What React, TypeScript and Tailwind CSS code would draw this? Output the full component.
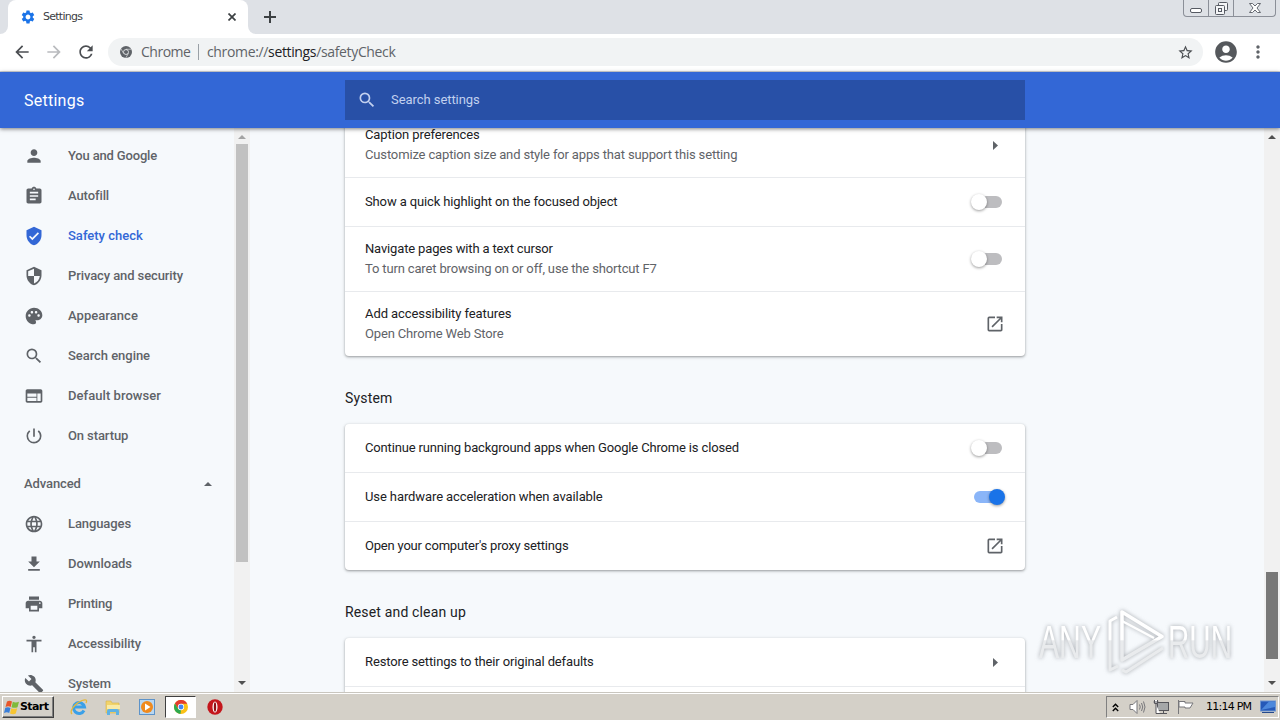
import type { ReactNode } from 'react';
import clsx from 'clsx';
import {
  MdAccessibility,
  MdAccountCircle,
  MdArrowBack,
  MdArrowForward,
  MdAssignment,
  MdBuild,
  MdLanguage,
  MdMoreVert,
  MdOpenInNew,
  MdPalette,
  MdPerson,
  MdPowerSettingsNew,
  MdPrint,
  MdRefresh,
  MdSearch,
  MdSecurity,
  MdSettings,
  MdStarBorder,
  MdVerifiedUser,
  MdWeb,
} from 'react-icons/md';

interface NavItem {
  label: string;
  icon: ReactNode;
  tracking?: string;
  active?: boolean;
}

function DownloadIcon() {
  return (
    <svg viewBox="0 0 24 24" width="20" height="20" fill="currentColor">
      <path d="M19 9h-4V3H9v6H5l7 7 7-7zM5 18v2h14v-2H5z" />
    </svg>
  );
}

const mainNav: NavItem[] = [
  { label: 'You and Google', icon: <MdPerson size={20} />, tracking: 'tracking-[-0.17px]' },
  { label: 'Autofill', icon: <MdAssignment size={20} />, tracking: 'tracking-[-0.1px]' },
  { label: 'Safety check', icon: <MdVerifiedUser size={20} />, active: true },
  { label: 'Privacy and security', icon: <MdSecurity size={20} />, tracking: 'tracking-[-0.1px]' },
  { label: 'Appearance', icon: <MdPalette size={20} />, tracking: 'tracking-[0.05px]' },
  { label: 'Search engine', icon: <MdSearch size={20} />, tracking: 'tracking-[-0.05px]' },
  { label: 'Default browser', icon: <MdWeb size={20} />, tracking: 'tracking-[0.05px]' },
  { label: 'On startup', icon: <MdPowerSettingsNew size={20} />, tracking: 'tracking-[-0.1px]' },
];

const advancedNav: NavItem[] = [
  { label: 'Languages', icon: <MdLanguage size={20} />, tracking: 'tracking-[-0.1px]' },
  { label: 'Downloads', icon: <DownloadIcon />, tracking: 'tracking-[-0.05px]' },
  { label: 'Printing', icon: <MdPrint size={20} />, tracking: 'tracking-[-0.2px]' },
  { label: 'Accessibility', icon: <MdAccessibility size={20} />, tracking: 'tracking-[-0.05px]' },
  { label: 'System', icon: <MdBuild size={20} />, tracking: 'tracking-[-0.1px]' },
];

function NavRow({ item }: { item: NavItem }) {
  return (
    <div
      className={clsx(
        'flex h-10 shrink-0 items-center gap-6 pl-6 text-[13px] font-medium',
        item.active ? 'text-[#3367d6]' : 'text-[#5f6368]'
      )}
    >
      {item.icon}
      <span className={item.tracking}>{item.label}</span>
    </div>
  );
}

function Arrow({ dir, className }: { dir: 'up' | 'down' | 'right'; className?: string }) {
  const points = {
    up: '0,4 4,0 8,4',
    down: '0,0 8,0 4,4',
    right: '0,0 5,4.5 0,9',
  };
  const wide = dir !== 'right';
  return (
    <svg width={wide ? 8 : 5} height={wide ? 4 : 9} fill="currentColor" className={className}>
      <polygon points={points[dir]} />
    </svg>
  );
}

function Toggle({ on }: { on?: boolean }) {
  return (
    <div className="flex h-4 w-[34px] items-center px-[3px]">
      <div className={clsx('flex h-3 w-7 items-center rounded-full', on ? 'justify-end bg-[#8ab5f8]' : 'bg-[#bdbdc0]')}>
        <div
          className={clsx(
            'h-4 w-4 shrink-0 rounded-full shadow-[0_1px_3px_rgba(0,0,0,0.4)]',
            on ? '-mr-[3px] bg-[#1a73e8]' : '-ml-[3px] bg-white'
          )}
        />
      </div>
    </div>
  );
}

interface RowProps {
  title: string;
  sub?: string;
  titleTracking?: string;
  children?: ReactNode;
}

function Row({ title, sub, titleTracking = 'tracking-[-0.13px]', children }: RowProps) {
  return (
    <div
      className={clsx(
        'flex items-center justify-between border-t border-[#e8eaed] px-5 first:border-t-0',
        sub ? 'h-[65px] first:h-16' : 'h-[49px] first:h-12'
      )}
    >
      <div className="text-[13px] leading-5">
        <div className={clsx('text-[#202124]', titleTracking)}>{title}</div>
        {sub && <div className="tracking-[-0.15px] text-[#5f6368]">{sub}</div>}
      </div>
      {children}
    </div>
  );
}

function Card({ children, className }: { children: ReactNode; className?: string }) {
  return (
    <div
      className={clsx(
        'shrink-0 rounded bg-white shadow-[0_1px_2px_rgba(60,64,67,0.35),0_1px_3px_1px_rgba(60,64,67,0.15)]',
        className
      )}
    >
      {children}
    </div>
  );
}

function SectionTitle({ children }: { children: ReactNode }) {
  return (
    <h2 className="flex h-[68px] shrink-0 items-center pt-[15px] text-sm tracking-[0.16px] text-[#202124]">
      {children}
    </h2>
  );
}

const openIcon = <MdOpenInNew size={20} className="text-[#5f6368]" />;
const rightArrow = <Arrow dir="right" className="mr-[7px] text-[#5f6368]" />;

function ChromeMark({ mono, size }: { mono?: boolean; size: number }) {
  return (
    <svg width={size} height={size} viewBox="0 0 24 24">
      <circle cx="12" cy="12" r="12" fill={mono ? '#5f6368' : '#fbc116'} />
      {mono ? (
        <path d="M12 6.5h10.5M7.2 14.8L2 5.8M16.8 14.8l-5.2 9" stroke="#f1f3f4" strokeWidth="1.2" fill="none" />
      ) : (
        <>
          <path d="M12 6.5h10.7A12 12 0 0 0 1.6 6l5.6 9z" fill="#e33b2e" />
          <path d="M1.6 6l5.6 9.3L12 17.5l-1 6.4A12 12 0 0 1 1.6 6z" fill="#2da94f" />
        </>
      )}
      <circle cx="12" cy="12" r="5.4" fill={mono ? '#f1f3f4' : '#fff'} />
      <circle cx="12" cy="12" r="4.2" fill={mono ? '#5f6368' : '#4285f4'} />
    </svg>
  );
}

function TabStrip() {
  return (
    <div className="flex h-[34px] shrink-0 justify-between bg-[#dee1e6]">
      <div className="flex">
        <div className="w-2 bg-white">
          <div className="h-full w-2 rounded-br-lg bg-[#dee1e6]" />
        </div>
        <div className="flex w-60 items-center rounded-t-lg bg-white pr-3 pl-3">
          <MdSettings size={16} className="text-[#1a73e8]" />
          <span className="ml-[7px] flex-1 pt-px font-['DejaVu_Sans'] text-[11px] tracking-[-0.75px] text-[#3c4043]">
            Settings
          </span>
          <svg width="8" height="8" stroke="#3c4043" strokeWidth="1.7">
            <path d="M.5.5l7 7M7.500.5l-7 7" />
          </svg>
        </div>
        <div className="w-2 bg-white">
          <div className="h-full w-2 rounded-bl-lg bg-[#dee1e6]" />
        </div>
        <svg width="12" height="12" className="mt-[11px] ml-2" stroke="#3c4043" strokeWidth="2">
          <path d="M6 0v12M0 6h12" />
        </svg>
      </div>
      <div className="mr-1 flex h-[17px] w-[93px] rounded-b border border-t-0 border-[#8b8f98]">
        <div className="flex w-[25px] items-end justify-center border-r border-[#8b8f98] pb-[3px]">
          <div className="h-[5px] w-3 rounded-xs border border-[#565a63] bg-white" />
        </div>
        <div className="flex w-[25px] items-center justify-center border-r border-[#8b8f98]">
          <svg width="13" height="13" fill="#f4f5f7" stroke="#565a63">
            <rect x="3.5" y="0.5" width="9" height="8" rx="1" />
            <rect x="0.5" y="3.5" width="9" height="9" rx="1" />
            <rect x="3.5" y="6.5" width="3" height="3" />
          </svg>
        </div>
        <div className="flex flex-1 items-center justify-center">
          <svg width="12" height="10" fill="#fff" stroke="#565a63" strokeWidth="0.9">
            <path d="M.5.5h3L6 3 8.500.5h3L8 5l3.500 4.500h-3L6 7 3.500 9.500h-3L4 5z" />
          </svg>
        </div>
      </div>
    </div>
  );
}

function Toolbar() {
  return (
    <div className="flex h-[38px] shrink-0 items-center border-b border-[#d5d8dc] bg-white pb-px pl-3 text-[#5f6368]">
      <MdArrowBack size={20} className="text-[#4b4e52]" />
      <MdArrowForward size={20} className="ml-3 text-[#b9bbbe]" />
      <MdRefresh size={20} className="ml-3 text-[#4b4e52]" />
      <div className="ml-3 flex h-7 w-[1095px] items-center rounded-full bg-[#f1f3f4] pr-[9px] pl-3 font-['Open_Sans'] text-[14px]">
        <ChromeMark mono size={12} />
        <span className="ml-[9px] w-[49px] pb-px tracking-[-0.5px] whitespace-nowrap">Chrome</span>
        <div className="mr-2 ml-2 h-4 w-px bg-[#9aa0a6]" />
        <span className="flex-1 pb-px tracking-[-0.35px]">
          chrome://<span className="text-[#202124]">settings</span>/safetyCheck
        </span>
        <MdStarBorder size={17} className="text-[#4b4e52]" />
      </div>
      <MdAccountCircle size={26} className="ml-[10px] text-[#55585c]" />
      <MdMoreVert size={20} className="ml-[9px]" />
    </div>
  );
}

function Header() {
  return (
    <div className="z-10 flex h-14 shrink-0 items-center bg-[#3367d6] shadow-[0_1px_4px_rgba(0,0,0,0.5)]">
      <h1 className="w-[345px] pt-0.5 pl-6 text-base tracking-[0.25px] text-white">Settings</h1>
      <div className="flex h-10 w-[680px] items-center bg-[#2850a7] pl-3 text-[#c2d0ef]">
        <MdSearch size={20} />
        <span className="ml-[14px] text-[13px] tracking-[-0.06px]">Search settings</span>
      </div>
    </div>
  );
}

function Sidebar() {
  return (
    <div className="flex w-[250px] shrink-0 overflow-hidden">
      <div className="flex flex-1 flex-col overflow-hidden pt-2">
        {mainNav.map((item) => (
          <NavRow key={item.label} item={item} />
        ))}
        <div className="mt-2 flex h-10 shrink-0 items-center justify-between pr-[22px] pl-6 text-[13px] font-medium text-[#5f6368]">
          <span className="tracking-[-0.1px]">Advanced</span>
          <Arrow dir="up" />
        </div>
        {advancedNav.map((item) => (
          <NavRow key={item.label} item={item} />
        ))}
      </div>
      <div className="flex w-4 flex-col items-center bg-[#f1f1f1]">
        <Arrow dir="up" className="mt-[7px] text-[#a3a3a3]" />
        <div className="mt-[5px] h-[418px] w-3 bg-[#c1c1c1]" />
        <Arrow dir="down" className="mt-auto mb-[7px] text-[#505050]" />
      </div>
    </div>
  );
}

function Watermark() {
  return (
    <svg
      className="absolute top-[602px] left-[1026px] drop-shadow-[0_0_2px_rgba(120,125,130,0.65)]"
      width="254"
      height="78"
      fontFamily="'Liberation Sans Narrow', 'Liberation Sans', sans-serif"
      fontSize="47"
    >
      <defs>
        <linearGradient id="mark" gradientUnits="userSpaceOnUse" x1="0" y1="0" x2="0" y2="78">
          <stop offset="0.48" stopColor="#ffffff" />
          <stop offset="0.5" stopColor="#e9ebed" />
        </linearGradient>
      </defs>
      <g fill="url(#mark)">
        <text x="13" y="56" textLength="62" lengthAdjust="spacingAndGlyphs">
          ANY
        </text>
        <text x="142" y="56" textLength="64" lengthAdjust="spacingAndGlyphs">
          RUN
        </text>
      </g>
      <g fill="none" stroke="url(#mark)" strokeWidth="3.5" strokeLinejoin="round">
        <path d="M96 10v48l40-23.500z" />
        <path d="M91 15l-7 4v49l8-4M96 68l4 2 37-24" strokeWidth="3" />
        <path d="M96 19l32 17" strokeWidth="2.5" />
      </g>
    </svg>
  );
}

function MainArea() {
  return (
    <div className="flex flex-1 justify-between overflow-hidden">
      <div className="ml-[95px] flex w-[680px] flex-col">
        <Card className="-mt-[15px]">
          <Row
            title="Caption preferences"
            titleTracking="tracking-[-0.1px]"
            sub="Customize caption size and style for apps that support this setting"
          >
            {rightArrow}
          </Row>
          <Row title="Show a quick highlight on the focused object">
            <Toggle />
          </Row>
          <Row
            title="Navigate pages with a text cursor"
            titleTracking="tracking-[-0.15px]"
            sub="To turn caret browsing on or off, use the shortcut F7"
          >
            <Toggle />
          </Row>
          <Row title="Add accessibility features" titleTracking="tracking-[-0.08px]" sub="Open Chrome Web Store">
            {openIcon}
          </Row>
        </Card>
        <SectionTitle>System</SectionTitle>
        <Card>
          <Row
            title="Continue running background apps when Google Chrome is closed"
            titleTracking="tracking-[-0.16px]"
          >
            <Toggle />
          </Row>
          <Row title="Use hardware acceleration when available" titleTracking="tracking-[-0.1px]">
            <Toggle on />
          </Row>
          <Row title="Open your computer's proxy settings" titleTracking="tracking-[-0.2px]">
            {openIcon}
          </Row>
        </Card>
        <SectionTitle>Reset and clean up</SectionTitle>
        <Card>
          <Row title="Restore settings to their original defaults">{rightArrow}</Row>
          <Row title="" />
        </Card>
      </div>
      <div className="flex w-4 flex-col items-center bg-[#f1f1f1]">
        <Arrow dir="up" className="mt-[7px] text-[#505050]" />
        <div className="mt-[433px] h-[87px] w-3 bg-[#787878]" />
        <Arrow dir="down" className="mt-auto mb-[7px] text-[#505050]" />
      </div>
    </div>
  );
}

function WindowsFlag() {
  return (
    <svg width="16" height="15" viewBox="0 0 16 15">
      <path d="M3 1.500Q5.500 0 8 1.500L6.700 7Q4.500 5.500 1.500 7z" fill="#e8562a" />
      <path d="M8.800 1.800Q11.500 3.200 15 1.800L13.500 7.200Q10.500 8.500 7.500 7.200z" fill="#7fba3c" />
      <path d="M1.300 7.800Q4 6.500 6.500 8L5.200 13Q3 11.500 0 13z" fill="#3a7fd9" />
      <path d="M7.300 8.200Q10 9.500 13.200 8.200L11.800 13.500Q9 14.800 6 13.400z" fill="#f7c531" />
    </svg>
  );
}

function Taskbar() {
  return (
    <div className="flex h-7 shrink-0 items-center border-t border-[#c9c6bf] bg-[#d4d0c8] pt-px font-['DejaVu_Sans'] shadow-[inset_0_1px_0_#fff]">
      <div className="ml-0.5 flex h-[22px] w-[52px] items-center border border-t-white border-r-[#404040] border-b-[#404040] border-l-white pl-px shadow-[inset_-1px_-1px_0_#808080]">
        <WindowsFlag />
        <span className="pt-px text-[11px] font-bold tracking-[-0.6px] text-black">Start</span>
      </div>
      {/* Internet Explorer */}
      <svg width="18" height="18" viewBox="0 0 18 18" className="ml-4" fill="none">
        <path d="M14 12.500A5.500 5.500 0 1 1 14.500 9H5" stroke="#3aa0e8" strokeWidth="3" />
        <path d="M2 16C-1 13 5 5 12 2.500 16 1 17.500 2 16 5" stroke="#e6b93a" strokeWidth="1.300" />
      </svg>
      {/* Explorer */}
      <svg width="16" height="17" viewBox="0 0 16 17" className="ml-[17px]">
        <path d="M1 2h5l1 2h7v10H1z" fill="#f1d36b" stroke="#d7b248" strokeWidth="0.600" />
        <path d="M2 6h13v4H2z" fill="#f9eaa6" />
        <path d="M2 16v-4q0-2 2-2h8q2 0 2 2v4h-3v-3H5v3z" fill="#5fb2e4" />
      </svg>
      {/* Media player */}
      <svg width="16" height="16" viewBox="0 0 16 16" className="ml-[18px]">
        <rect x="0.500" y="0.500" width="15" height="15" fill="#b9d7f1" stroke="#5d93c9" />
        <circle cx="8" cy="8" r="6" fill="#f08a1d" />
        <path d="M6 4.500v7L11.500 8z" fill="#fff" />
      </svg>
      <div className="ml-[10px] flex h-[22px] w-[31px] items-center justify-center border border-t-[#404040] border-r-white border-b-white border-l-[#404040] bg-white">
        <ChromeMark size={14} />
      </div>
      <svg width="16" height="16" viewBox="0 0 16 16" className="ml-[11px]">
        <circle cx="8" cy="8" r="7.700" fill="#c4161c" />
        <ellipse cx="8" cy="8" rx="2.500" ry="5.500" fill="#fff" />
        <ellipse cx="8" cy="8" rx="1.200" ry="4.800" fill="#8e0f14" />
      </svg>
      <div className="mr-px ml-auto flex h-[22px] w-[173px] items-center border border-t-[#808080] border-r-white border-b-white border-l-[#808080]">
        <svg width="7" height="9" className="ml-[5px]" fill="none" stroke="#000" strokeWidth="1.400">
          <path d="M.8 4l2.700-2.700L6.200 4M.8 8l2.700-2.700L6.200 8" />
        </svg>
        <svg width="17" height="16" className="ml-[10px]" fill="none" stroke="#77777b">
          <path d="M1 5.500h3l4-4v13l-4-4H1z" fill="#fff" />
          <path d="M10.500 5.500q1.500 2.500 0 5M12.500 4q2.500 4 0 8M14.500 2.500q3 5.500 0 11" />
        </svg>
        <svg width="17" height="16" className="ml-[7px]" stroke="#55555a">
          <rect x="4.500" y="3.500" width="11" height="8" fill="#a5a7a8" />
          <path d="M7 14.500h7M10.500 12v2" />
          <path d="M1.500 1v3.500h3V1M3 5v9.500h4M.5 3h5" fill="#fff" />
        </svg>
        <svg width="17" height="16" className="ml-[7px]" fill="#fff" stroke="#77777b">
          <path d="M1.500 1v14" />
          <path d="M2 2.500h6v1.500h8L13 9H8V8H2z" />
        </svg>
        <span className="ml-3 w-[45px] pt-px text-[11px] tracking-[-0.75px] whitespace-nowrap text-black">11:14 PM</span>
        <svg width="16" height="14" className="ml-[9px]">
          <rect x="0.500" y="1" width="15" height="10" fill="#2559b8" stroke="#6d94cf" />
          <path d="M1 10L9 1.500h6V7z" fill="#4c88dc" />
          <path d="M2 12.500h12" stroke="#24498c" />
        </svg>
      </div>
    </div>
  );
}

export default function App() {
  return (
    <div className="relative flex h-[720px] w-[1280px] flex-col overflow-hidden bg-[#f6f9fc] font-[Roboto,sans-serif]">
      <TabStrip />
      <Toolbar />
      <Header />
      <div className="flex min-h-0 flex-1">
        <Sidebar />
        <MainArea />
      </div>
      <Taskbar />
      <Watermark />
    </div>
  );
}
